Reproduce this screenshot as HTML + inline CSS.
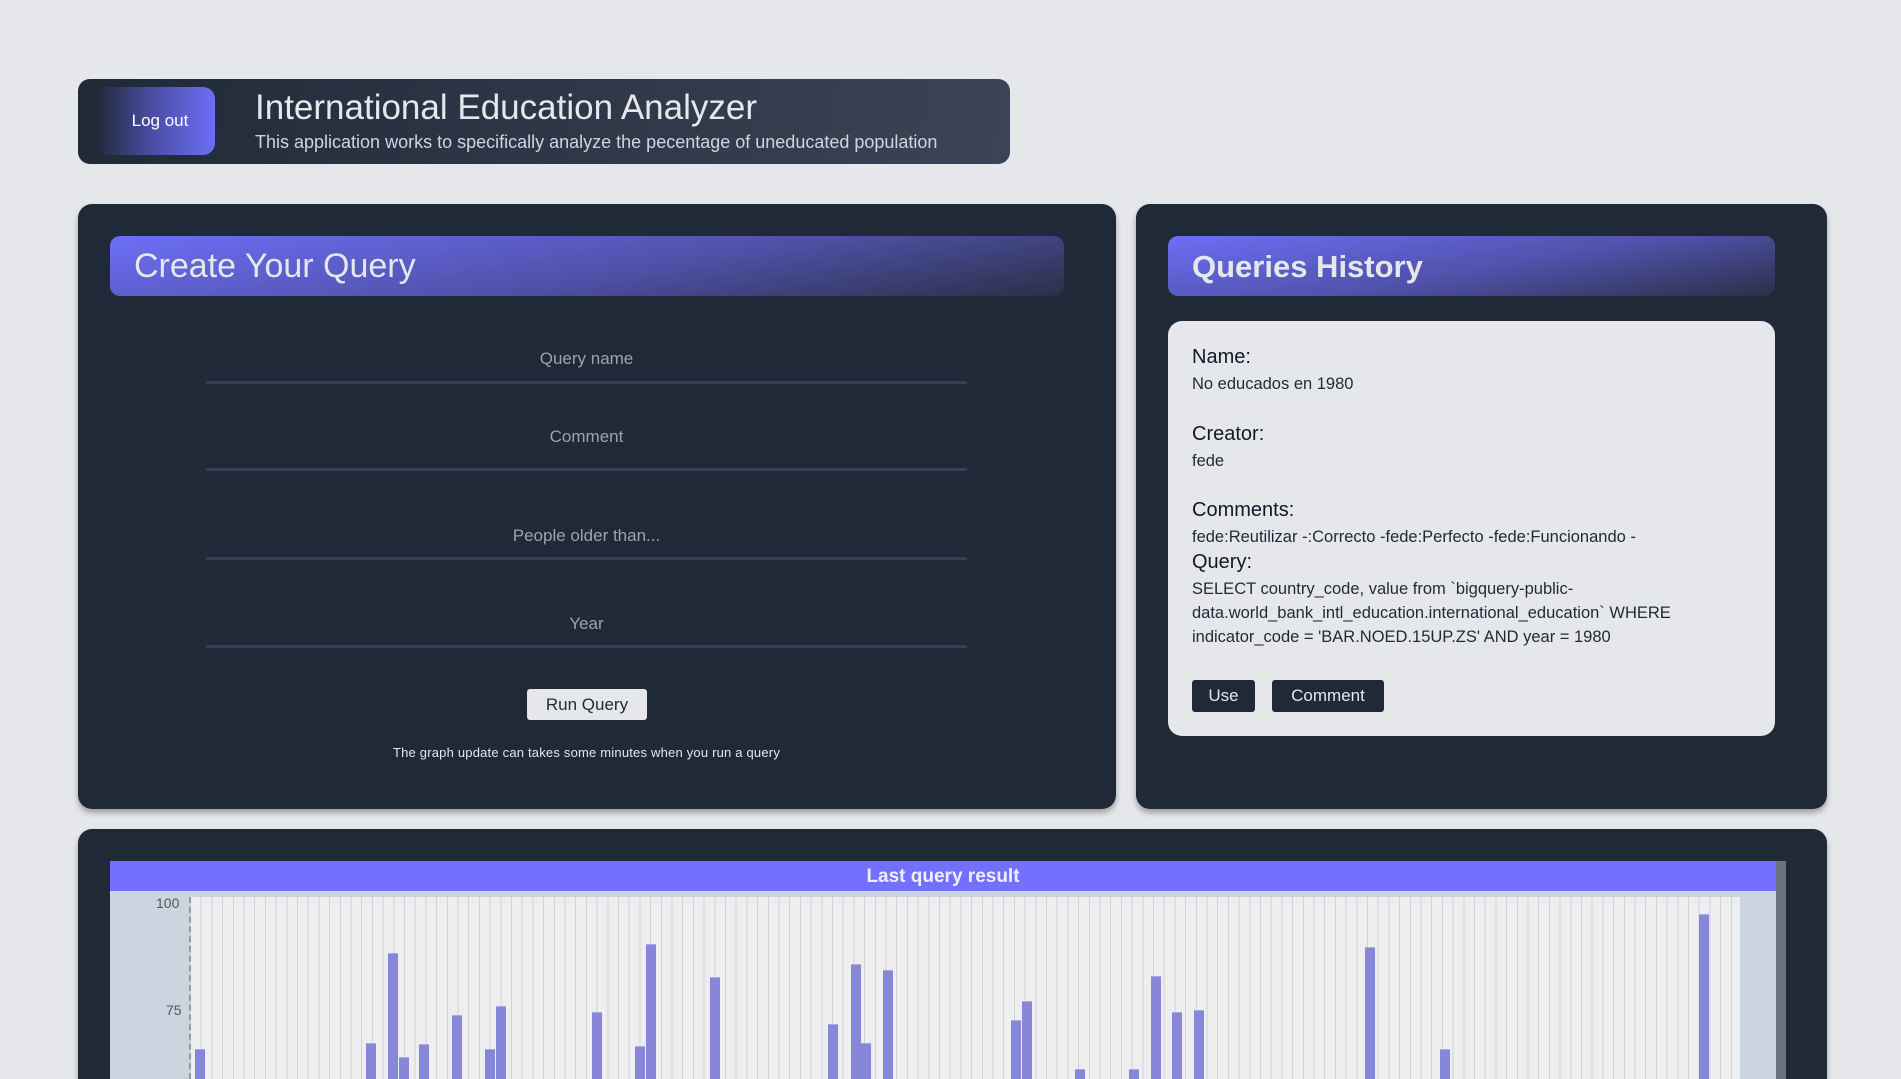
<!DOCTYPE html>
<html style="width:1901px;height:1079px;overflow:hidden"><head><meta charset="utf-8"><style>
*{margin:0;padding:0;box-sizing:border-box}
body{width:1901px;height:1079px;overflow:hidden;background:#e5e7eb;font-family:"Liberation Sans",sans-serif;position:relative}
.a{position:absolute}
.panel{background:#1f2937;border-radius:14px;box-shadow:0 4px 6px rgba(0,0,0,.3)}
.bar{background:linear-gradient(170deg,#6c6ff6 0%,#4f51a8 55%,#2a3048 100%);border-radius:10px;color:#e5e7eb}
.line{height:3px;background:#374151;border-radius:2px;left:206px;width:761px}
.ph{color:#9ca3af;font-size:17px;width:761px;left:206px;text-align:center}
.lbl{font-size:20px;color:#111827;left:1192px}
.val{font-size:16.5px;color:#1f2937;left:1192px;line-height:24px}
.btn{background:#1f2937;color:#e5e7eb;font-size:17px;border-radius:3px;text-align:center;line-height:32px}
.b{position:absolute;width:10px;background:#8886d9;bottom:0;border-top:1px solid #a9a8e8}
</style></head><body>
<div class="a" style="left:78px;top:79px;width:932px;height:85px;border-radius:12px;background:linear-gradient(100deg,#1f2937,#3b4456)"></div>
<div class="a" style="left:95px;top:87px;width:120px;height:68px;border-radius:12px;background:linear-gradient(90deg,#1f2937 0%,#4c4fa8 50%,#6c6ff6 100%);color:#fff;font-size:17px;line-height:68px;text-align:center;padding-left:10px">Log out</div>
<div class="a" style="left:255px;top:88px;color:#e5e7eb;font-size:35px">International Education Analyzer</div>
<div class="a" style="left:255px;top:132px;color:#d1d5db;font-size:18px">This application works to specifically analyze the pecentage of uneducated population</div>

<div class="a panel" style="left:78px;top:204px;width:1038px;height:605px"></div>
<div class="a bar" style="left:110px;top:236px;width:954px;height:60px;font-size:34px;line-height:60px;padding-left:24px">Create Your Query</div>
<div class="a ph" style="top:349px">Query name</div><div class="a line" style="top:381px"></div>
<div class="a ph" style="top:427px">Comment</div><div class="a line" style="top:468px"></div>
<div class="a ph" style="top:526px">People older than...</div><div class="a line" style="top:557px"></div>
<div class="a ph" style="top:614px">Year</div><div class="a line" style="top:645px"></div>
<div class="a" style="left:527px;top:689px;width:120px;height:31px;background:#e5e7eb;border-radius:3px;color:#1f2937;font-size:17px;text-align:center;line-height:31px">Run Query</div>
<div class="a" style="left:206px;top:745px;width:761px;text-align:center;color:#e5e7eb;font-size:13px;letter-spacing:.2px">The graph update can takes some minutes when you run a query</div>

<div class="a panel" style="left:1136px;top:204px;width:691px;height:605px"></div>
<div class="a bar" style="left:1168px;top:236px;width:607px;height:60px;font-size:31px;font-weight:bold;line-height:62px;padding-left:24px">Queries History</div>
<div class="a" style="left:1168px;top:321px;width:607px;height:415px;background:#e5e7eb;border-radius:14px"></div>
<div class="a lbl" style="top:346px">Name:</div>
<div class="a val" style="top:372px">No educados en 1980</div>
<div class="a lbl" style="top:423px">Creator:</div>
<div class="a val" style="top:449px">fede</div>
<div class="a lbl" style="top:499px">Comments:</div>
<div class="a val" style="top:525px">fede:Reutilizar -:Correcto -fede:Perfecto -fede:Funcionando -</div>
<div class="a lbl" style="top:551px">Query:</div>
<div class="a val" style="top:577px;width:560px">SELECT country_code, value from `bigquery-public-data.world_bank_intl_education.international_education` WHERE indicator_code = 'BAR.NOED.15UP.ZS' AND year = 1980</div>
<div class="a btn" style="left:1192px;top:680px;width:63px">Use</div>
<div class="a btn" style="left:1272px;top:680px;width:112px">Comment</div>

<div class="a panel" style="left:78px;top:829px;width:1749px;height:250px;border-radius:14px 14px 0 0"></div>
<div class="a" style="left:110px;top:861px;width:1666px;height:30px;background:#7370ff;color:#eef;font-weight:bold;font-size:19px;text-align:center;line-height:32px">Last query result</div>
<div class="a" style="left:1776px;top:861px;width:10px;height:218px;background:#6b7280"></div>
<div class="a" style="left:110px;top:891px;width:1666px;height:188px;background:#cbd5e0"></div>
<div class="a" style="left:190px;top:897px;width:1550px;height:182px;background:repeating-linear-gradient(90deg,#cdd3dd 0 1px,#eeeeee 1px 10.7px)"></div>
<div class="a" style="left:189px;top:897px;width:0;height:182px;border-left:2px dashed #999"></div>
<div class="a" style="left:156px;top:895px;font-size:14px;color:#555">100</div>
<div class="a" style="left:166px;top:1002px;font-size:14px;color:#555">75</div>
<div class="a" style="left:0;top:0;width:1901px;height:1079px;overflow:hidden">
<div class="b" style="left:195px;top:1049px"></div>
<div class="b" style="left:366px;top:1043px"></div>
<div class="b" style="left:388px;top:953px"></div>
<div class="b" style="left:399px;top:1057px"></div>
<div class="b" style="left:419px;top:1044px"></div>
<div class="b" style="left:452px;top:1015px"></div>
<div class="b" style="left:485px;top:1049px"></div>
<div class="b" style="left:496px;top:1006px"></div>
<div class="b" style="left:592px;top:1012px"></div>
<div class="b" style="left:635px;top:1046px"></div>
<div class="b" style="left:646px;top:944px"></div>
<div class="b" style="left:710px;top:977px"></div>
<div class="b" style="left:828px;top:1024px"></div>
<div class="b" style="left:851px;top:964px"></div>
<div class="b" style="left:861px;top:1043px"></div>
<div class="b" style="left:883px;top:970px"></div>
<div class="b" style="left:1011px;top:1020px"></div>
<div class="b" style="left:1022px;top:1001px"></div>
<div class="b" style="left:1075px;top:1069px"></div>
<div class="b" style="left:1129px;top:1069px"></div>
<div class="b" style="left:1151px;top:976px"></div>
<div class="b" style="left:1172px;top:1012px"></div>
<div class="b" style="left:1194px;top:1010px"></div>
<div class="b" style="left:1365px;top:947px"></div>
<div class="b" style="left:1440px;top:1049px"></div>
<div class="b" style="left:1699px;top:914px"></div>
</div>
</body></html>
